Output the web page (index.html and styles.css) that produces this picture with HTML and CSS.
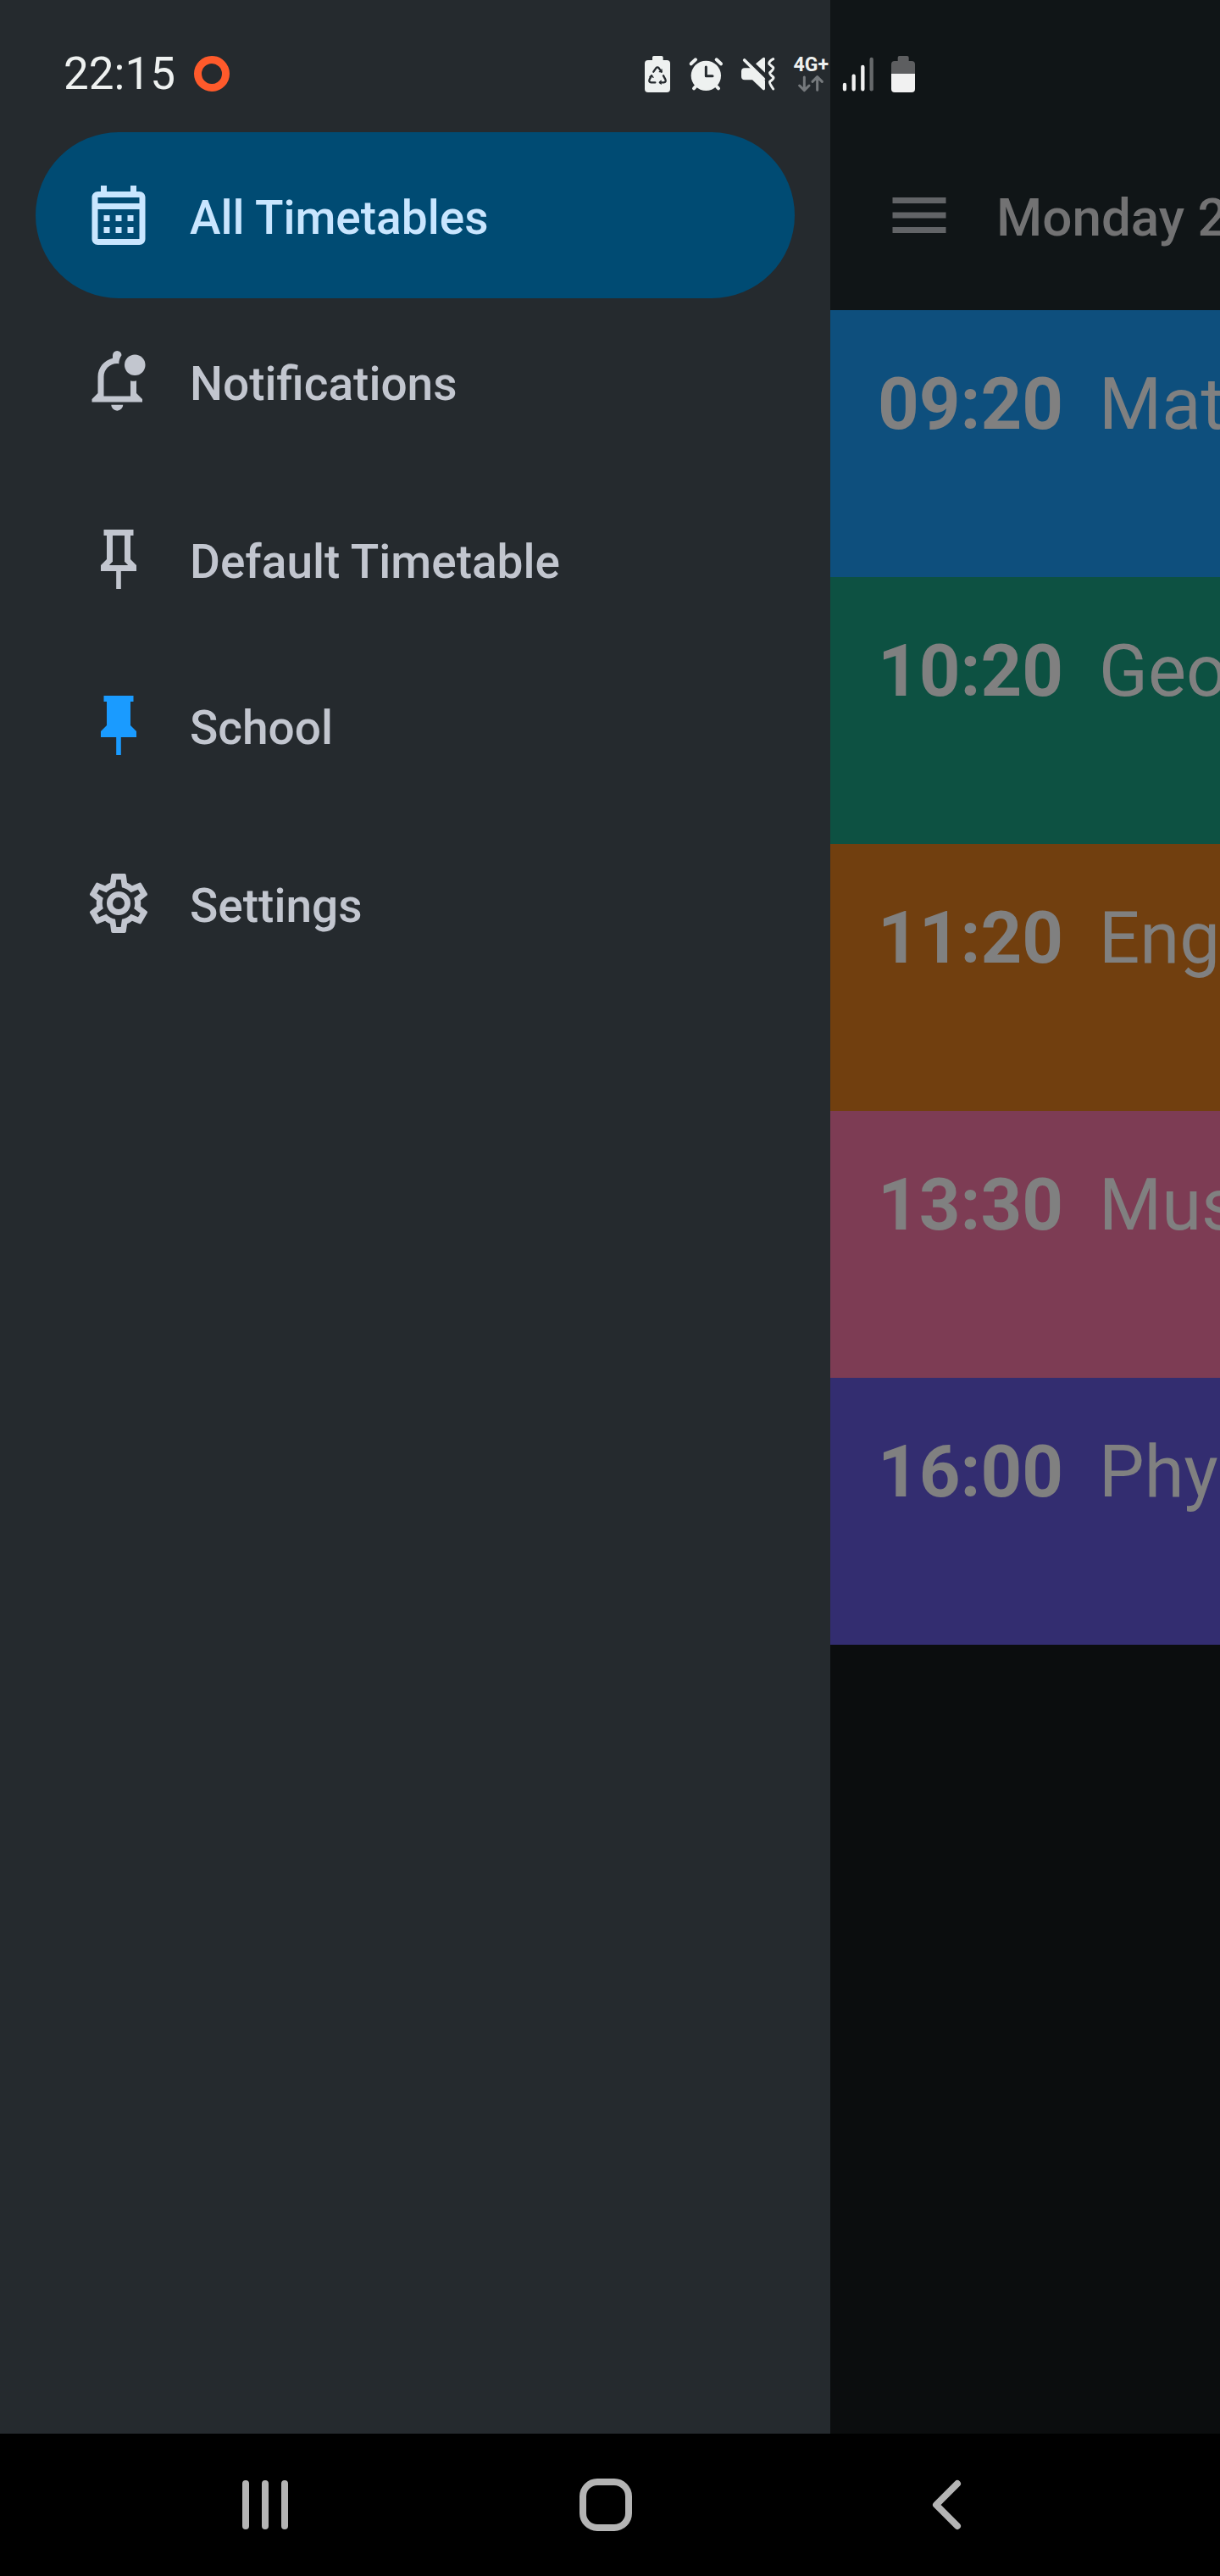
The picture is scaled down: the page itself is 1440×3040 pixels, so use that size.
FILE: index.html
```html
<!DOCTYPE html>
<html lang="en">
<head>
<meta charset="utf-8">
<meta name="viewport" content="width=device-width, initial-scale=1">
<title>Timetable</title>
<link rel="stylesheet" href="styles.css">
</head>
<body>
<div class="screen">
  <header class="status">
    <div class="status-left">
      <time class="clock">22:15</time>
      <span class="ring"></span>
    </div>
    <div class="status-icons">
      <svg width="30" height="43" viewBox="63 75 90 129" aria-hidden="true">
        <path fill="#eef1f0" d="M90 90V80q0-5 5-5h28q5 0 5 5v10h13q12 0 12 12v90q0 12-12 12H75q-12 0-12-12v-90q0-12 12-12z"/>
        <g fill="none" stroke="#252a2e" stroke-width="7" stroke-linecap="round" stroke-linejoin="round">
          <path d="M94 131l9-13q5-6 10 0l9 13M87 145l-7 13q-4 10 6 11h14M129 145l7 13q4 10-6 11h-13"/>
          <path d="M121 163l-6 6 6 5M115 131h8v-8M81 149l7-5 5 7" stroke-width="4"/>
        </g>
      </svg>
      <svg width="47" height="43" viewBox="201 75 141 129" aria-hidden="true">
        <g stroke="#eef1f0" stroke-width="12" stroke-linecap="round"><path d="M227 103l16-15M333 103l-16-15M237 190l12-13M324 190l-12-13"/></g>
        <circle cx="280" cy="145" r="53" fill="#eef1f0"/>
        <path d="M280 114v32h23" fill="none" stroke="#252a2e" stroke-width="9" stroke-linecap="round" stroke-linejoin="round"/>
      </svg>
      <svg width="45" height="43" viewBox="390 75 135 129" aria-hidden="true">
        <path fill="#eef1f0" d="M417 118h24l48 45v29q-2 7-8 3l-37-35h-27q-12 0-12-12v-18q0-12 12-12zM456 103l25-21q7-4 8 3v49z"/>
        <path d="M416 90l68 67" stroke="#eef1f0" stroke-width="11" stroke-linecap="round"/>
        <path d="M518 86q-18 10-14 18l14 12q3 5-12 18-2 5 12 16 4 5-12 16-3 5 12 26" fill="none" stroke="#eef1f0" stroke-width="9" stroke-linecap="round" stroke-linejoin="round"/>
      </svg>
      <span class="network">
        <span class="network-label">4G+</span>
        <svg width="30" height="20" viewBox="606 147 90 60" aria-hidden="true">
          <path d="M628 153v46M611 183l17 17 17-17M674 199v-46M657 169l17-17 17 17" fill="none" stroke="#75797c" stroke-width="9" stroke-linecap="round" stroke-linejoin="round"/>
        </svg>
      </span>
      <svg width="37" height="43" viewBox="762 75 111 129" aria-hidden="true">
        <g stroke="#f1f1f1" stroke-width="13" stroke-linecap="round"><path d="M771 177v16M803 146v47M835 114v79"/><path d="M866 87v106" stroke="#66696b"/></g>
      </svg>
      <svg width="33" height="43" viewBox="921 75 99 129" aria-hidden="true">
        <path fill="#5d5e60" d="M959 93V81q0-6 6-6h27q6 0 6 6v12h10q12 0 12 12v33h-84v-33q0-12 12-12z"/>
        <path fill="#f1f1f1" d="M936 138h84v54q0 12-12 12h-60q-12 0-12-12z"/>
      </svg>
    </div>
  </header>

  <div class="app">
    <nav class="drawer" aria-label="Main">
      <ul class="menu">
        <li><a class="item item-active" href="#all" aria-current="page">
          <svg class="icon" viewBox="0 0 24 24" aria-hidden="true"><path transform="translate(0 1)" d="M7 11H9V13H7V11M21 5V19C21 20.11 20.11 21 19 21H5C3.89 21 3 20.1 3 19V5C3 3.9 3.9 3 5 3H6V1H8V3H16V1H18V3H19C20.11 3 21 3.9 21 5M5 5V7H19V5H5M19 19V9H5V19H19M15 13V11H17V13H15M11 13V11H13V13H11M7 15H9V17H7V15M15 17V15H17V17H15M11 17V15H13V17H11Z"/></svg>
          <span class="label">All Timetables</span></a></li>
        <li><a class="item" href="#notifications">
          <svg class="icon" viewBox="0 0 24 24" aria-hidden="true"><path d="M7 17h9v-5.2q1 .3 2 0V16l2 2v1H3v-1l2-2v-5.5C5 7.4 7.1 4.9 10 4.2V3.2a1.5 1.5 0 0 1 3 0C12.4 4 12.1 5 12.1 6.05L11.5 6C9 6 7 8 7 10.5zM9.5 19.9h4a2 2 0 0 1-4 0z"/><circle cx="17.5" cy="6.5" r="3.5"/></svg>
          <span class="label">Notifications</span></a></li>
      </ul>
      <ul class="menu">
        <li><a class="item" href="#default">
          <svg class="icon" viewBox="0 0 24 24" aria-hidden="true"><path d="M16 12V4H17V2H7V4H8V12L6 14V16H11.2V22H12.8V16H18V14L16 12M8.8 14L10 12.8V4H14V12.8L15.2 14H8.8Z"/></svg>
          <span class="label">Default Timetable</span></a></li>
        <li><a class="item" href="#school">
          <svg class="icon icon-pinned" viewBox="0 0 24 24" aria-hidden="true"><path d="M16 12V4H17V2H7V4H8V12L6 14V16H11.2V22H12.8V16H18V14L16 12Z"/></svg>
          <span class="label">School</span></a></li>
      </ul>
      <ul class="menu">
        <li><a class="item" href="#settings">
          <svg class="icon" viewBox="0 0 24 24" aria-hidden="true"><path d="M12,8A4,4 0 0,1 16,12A4,4 0 0,1 12,16A4,4 0 0,1 8,12A4,4 0 0,1 12,8M12,10A2,2 0 0,0 10,12A2,2 0 0,0 12,14A2,2 0 0,0 14,12A2,2 0 0,0 12,10M10,22C9.75,22 9.54,21.82 9.5,21.58L9.13,18.93C8.5,18.68 7.96,18.34 7.44,17.94L4.95,18.95C4.73,19.03 4.46,18.95 4.34,18.73L2.34,15.27C2.21,15.05 2.27,14.78 2.46,14.63L4.57,12.97L4.5,12L4.57,11L2.46,9.37C2.27,9.22 2.21,8.95 2.34,8.73L4.34,5.27C4.46,5.05 4.73,4.96 4.95,5.05L7.44,6.05C7.96,5.66 8.5,5.32 9.13,5.07L9.5,2.42C9.54,2.18 9.75,2 10,2H14C14.25,2 14.46,2.18 14.5,2.42L14.87,5.07C15.5,5.32 16.04,5.66 16.56,6.05L19.05,5.05C19.27,4.96 19.54,5.05 19.66,5.27L21.66,8.73C21.79,8.95 21.73,9.22 21.54,9.37L19.43,11L19.5,12L19.43,13L21.54,14.63C21.73,14.78 21.79,15.05 21.66,15.27L19.66,18.73C19.54,18.95 19.27,19.04 19.05,18.95L16.56,17.95C16.04,18.34 15.5,18.68 14.87,18.93L14.5,21.58C14.46,21.82 14.25,22 14,22H10M11.25,4L10.88,6.61C9.68,6.86 8.62,7.5 7.85,8.39L5.44,7.35L4.69,8.65L6.8,10.2C6.4,11.37 6.4,12.64 6.8,13.8L4.68,15.36L5.43,16.66L7.86,15.62C8.63,16.5 9.68,17.14 10.87,17.38L11.24,20H12.76L13.13,17.39C14.32,17.14 15.37,16.5 16.14,15.62L18.57,16.66L19.32,15.36L17.2,13.81C17.6,12.64 17.6,11.37 17.2,10.2L19.31,8.65L18.56,7.35L16.15,8.39C15.38,7.5 14.32,6.86 13.12,6.62L12.75,4H11.25Z"/></svg>
          <span class="label">Settings</span></a></li>
      </ul>
    </nav>

    <main class="day">
      <div class="appbar">
        <button class="menu-button" type="button" aria-label="Close menu">
          <svg class="icon" viewBox="0 0 24 24" aria-hidden="true"><path d="M3 6h18v2H3zM3 11h18v2H3zM3 16h18v2H3z"/></svg>
        </button>
        <h1 class="title">Monday 2</h1>
      </div>
      <ol class="lessons">
        <li class="lesson blue"><time class="start">09:20</time><span>Mat</span></li>
        <li class="lesson green"><time class="start">10:20</time><span>Geo</span></li>
        <li class="lesson orange"><time class="start">11:20</time><span>Eng</span></li>
        <li class="lesson pink"><time class="start">13:30</time><span>Mus</span></li>
        <li class="lesson purple"><time class="start">16:00</time><span>Phy</span></li>
      </ol>
    </main>
  </div>

  <footer class="system-nav">
    <button type="button" aria-label="Recent apps">
      <svg width="64" height="64" viewBox="0 0 64 64" aria-hidden="true"><path d="M9 7v50M32 7v50M55 7v50"/></svg>
    </button>
    <button type="button" aria-label="Home">
      <svg width="64" height="64" viewBox="0 0 64 64" aria-hidden="true"><rect x="5" y="5" width="54" height="54" rx="17"/></svg>
    </button>
    <button type="button" aria-label="Back">
      <svg width="64" height="64" viewBox="0 0 64 64" aria-hidden="true"><path d="M45 7L20 32l25 25"/></svg>
    </button>
  </footer>
</div>
</body>
</html>
```
FILE: styles.css
```css
* { box-sizing: border-box; }

body {
  margin: 0;
  background: #000;
  font-family: Roboto, "Noto Sans", sans-serif;
}

ul, ol { list-style: none; margin: 0; padding: 0; }
svg { display: block; flex: none; }
button { border: 0; padding: 0; background: none; }

.screen {
  position: relative;
  display: flex;
  flex-direction: column;
  min-height: 100vh;
}

/* System status bar, drawn over both the drawer and the page */
.status {
  position: absolute;
  top: 0;
  left: 0;
  width: 100%;
  padding: 56px 25% 0 75px;
  display: flex;
  justify-content: space-between;
  align-items: center;
  pointer-events: none;
}
.status-left { display: flex; align-items: center; gap: 22px; }
.clock { font-size: 53px; line-height: 62px; color: #eef1f0; }
.ring {
  width: 42px;
  height: 42px;
  border: 9px solid #ff5a2b;
  border-radius: 50%;
}
.status-icons { display: flex; align-items: center; gap: 16px; }
.network {
  width: 47px;
  display: flex;
  flex-direction: column;
  align-items: flex-end;
  gap: 1px;
}
.network svg { margin-right: 6px; }
.network-label {
  font-size: 23px;
  line-height: 22px;
  font-weight: 700;
  color: #eef1f0;
}

.app { flex: 1; display: flex; }

.drawer {
  flex: none;
  width: min(980px, 70%);
  padding: 156px 42px 0;
  background: #252a2e;
  display: flex;
  flex-direction: column;
  gap: 14px;
}
.item {
  display: flex;
  align-items: center;
  gap: 42px;
  height: 196px;
  padding: 0 56px;
  border-radius: 98px;
  color: #c2c6cf;
  font-size: 55px;
  line-height: 64px;
  font-weight: 500;
  text-decoration: none;
  white-space: nowrap;
}
.item-active { background: #004b73; color: #c9e6ff; }
.label, .title { padding-top: 6px; }
.icon { width: 84px; height: 84px; fill: currentColor; }
.icon-pinned { color: #1a9bff; }

.day {
  flex: 1;
  min-width: 0;
  overflow: hidden;
  background: #0b0d0e;
  white-space: nowrap;
}
.appbar {
  display: flex;
  align-items: center;
  gap: 49px;
  height: 366px;
  padding: 142px 0 0 63px;
  background: #101517;
}
.menu-button { color: #626467; }
.title {
  margin: 0;
  font-size: 62px;
  line-height: 72px;
  font-weight: 500;
  color: #727273;
}
.lesson {
  display: flex;
  gap: 42px;
  height: 315px;
  padding: 61px 0 0 56px;
  font-size: 85px;
  line-height: 100px;
  color: #808080;
}
.start { font-weight: 700; }
.blue { background: #0e4f7d; }
.green { background: #0d5142; }
.orange { background: #713f0f; }
.pink { background: #7d3c54; }
.purple { background: #332d70; }

.system-nav {
  display: flex;
  height: 168px;
  padding: 0 122px 0 112px;
  background: #000;
}
.system-nav button {
  flex: 1;
  display: flex;
  align-items: center;
  justify-content: center;
}
.system-nav svg {
  fill: none;
  stroke: #b4b4b4;
  stroke-width: 8px;
  stroke-linecap: round;
  stroke-linejoin: round;
}
```
